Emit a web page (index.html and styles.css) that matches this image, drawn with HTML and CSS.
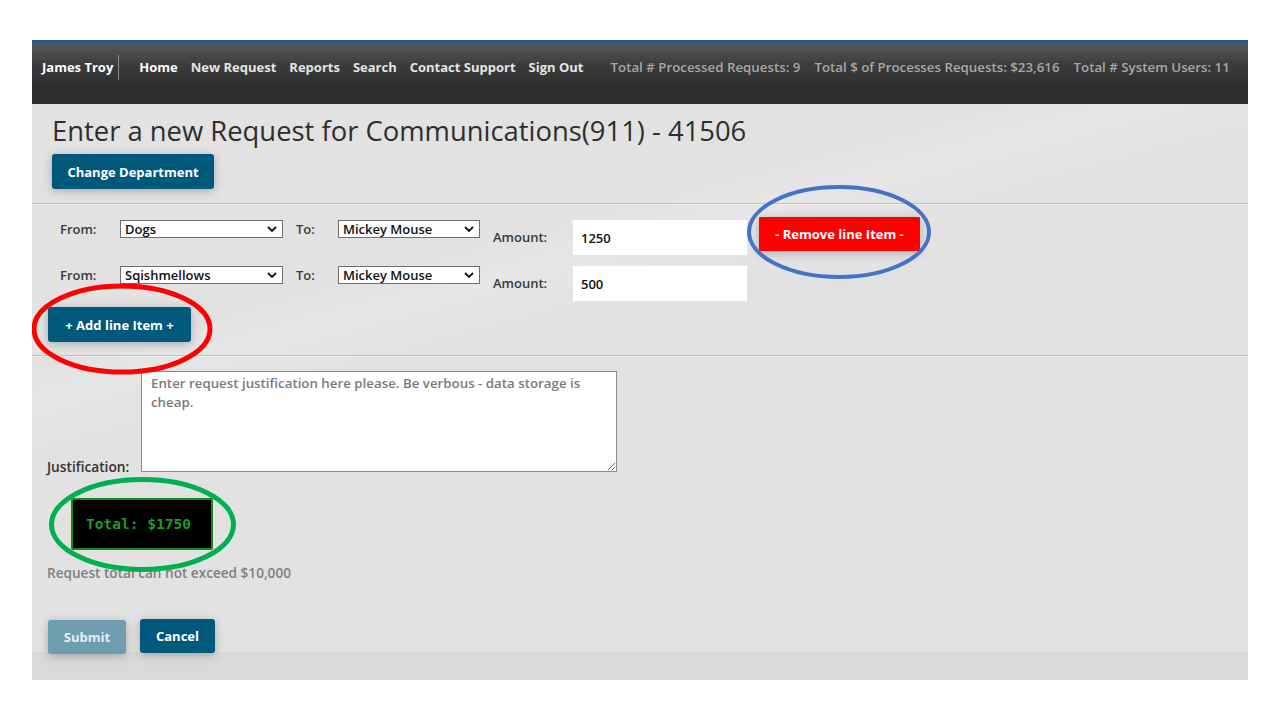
FILE: index.html
```html
<!DOCTYPE html>
<html>
<head>
<meta charset="utf-8">
<title>New Request</title>
<link rel="stylesheet" href="styles.css">
</head>
<body>
<div class="frame">
  <nav class="nav">
    <span class="user">James Troy</span>
    <span class="sep"></span>
    <a class="link home">Home</a>
    <a class="link">New Request</a>
    <a class="link">Reports</a>
    <a class="link">Search</a>
    <a class="link">Contact Support</a>
    <a class="link">Sign Out</a>
    <span class="stat first">Total # Processed Requests: 9</span>
    <span class="stat">Total $ of Processes Requests: $23,616</span>
    <span class="stat">Total # System Users: 11</span>
  </nav>
  <main class="main">
    <h1 class="title">Enter a new Request for Communications(911) - 41506</h1>
    <button class="btn btn-dept">Change Department</button>
    <div class="rule rule-top"></div>
    <div class="row row-1">
      <label class="lbl lbl-from">From:</label>
      <span class="selbox sel-from">
        <select class="sel"><option>Dogs</option></select>
        <svg class="chev" width="10" height="6" viewBox="0 0 10 6"><path d="M1 1 L5 5 L9 1" fill="none" stroke="#111" stroke-width="1.8"/></svg>
      </span>
      <label class="lbl lbl-to">To:</label>
      <span class="selbox sel-to">
        <select class="sel"><option>Mickey Mouse</option></select>
        <svg class="chev" width="10" height="6" viewBox="0 0 10 6"><path d="M1 1 L5 5 L9 1" fill="none" stroke="#111" stroke-width="1.8"/></svg>
      </span>
      <label class="lbl lbl-amt">Amount:</label>
      <input class="amt" type="text" value="1250">
      <button class="btn btn-remove">- Remove line Item -</button>
    </div>
    <div class="row row-2">
      <label class="lbl lbl-from">From:</label>
      <span class="selbox sel-from">
        <select class="sel"><option>Sqishmellows</option></select>
        <svg class="chev" width="10" height="6" viewBox="0 0 10 6"><path d="M1 1 L5 5 L9 1" fill="none" stroke="#111" stroke-width="1.8"/></svg>
      </span>
      <label class="lbl lbl-to">To:</label>
      <span class="selbox sel-to">
        <select class="sel"><option>Mickey Mouse</option></select>
        <svg class="chev" width="10" height="6" viewBox="0 0 10 6"><path d="M1 1 L5 5 L9 1" fill="none" stroke="#111" stroke-width="1.8"/></svg>
      </span>
      <label class="lbl lbl-amt">Amount:</label>
      <input class="amt" type="text" value="500">
    </div>
    <button class="btn btn-add">+ Add line Item +</button>
    <div class="rule rule-mid"></div>
    <div class="just">
      <label class="just-lbl">Justification:</label>
      <textarea class="just-text" placeholder="Enter request justification here please. Be verbous - data storage is cheap."></textarea>
    </div>
    <div class="total">Total: $1750</div>
    <p class="note">Request total can not exceed $10,000</p>
    <div class="actions">
      <button class="btn btn-submit">Submit</button>
      <button class="btn btn-cancel">Cancel</button>
    </div>
  </main>
  <div class="foot"></div>
  <svg class="marks" width="1216" height="640" viewBox="32 40 1216 640">
    <ellipse cx="122" cy="329" rx="88" ry="43" fill="none" stroke="#ff0000" stroke-width="5"/>
    <ellipse cx="839" cy="232" rx="90" ry="45" fill="none" stroke="#4472c4" stroke-width="4"/>
    <ellipse cx="142.5" cy="524.5" rx="91" ry="45" fill="none" stroke="#00b050" stroke-width="5"/>
  </svg>
</div>
</body>
</html>
```
FILE: styles.css
```css
html, body {
  margin: 0;
  padding: 0;
  background: #ffffff;
}
body {
  font-family: "Open Sans", Lato, "Liberation Sans", sans-serif;
}
.frame {
  position: relative;
  width: 1216px;
  height: 640px;
  margin: 40px 0 0 32px;
  overflow: hidden;
}
.nav {
  box-sizing: border-box;
  height: 64px;
  border-top: 3px solid #1d5c8c;
  background: linear-gradient(180deg, #5a5a5a 0%, #3c3c3c 35%, #2f2f2f 70%, #2c2c2c 100%);
  display: flex;
  align-items: flex-start;
  padding: 15px 0 0 10px;
  font-size: 13px;
  line-height: 18px;
  white-space: nowrap;
  overflow: hidden;
}
.nav > * {
  flex-shrink: 0;
}
.user {
  color: #ffffff;
  font-weight: 700;
}
.sep {
  width: 1px;
  height: 25px;
  margin: -3px 20px 0 5px;
  background: #8a8a8a;
}
.link {
  color: #e4e4e4;
  font-weight: 700;
  margin-right: 13px;
}
.link.home {
  color: #ffffff;
}
.stat {
  color: #a8a8a8;
  font-weight: 600;
  font-size: 13.3px;
  margin-right: 14px;
}
.stat.first {
  margin-left: 14px;
}
.main {
  box-sizing: border-box;
  height: 548px;
  background: linear-gradient(165deg, #e2e2e2 0%, #e2e2e2 30%, #e6e6e6 34%, #e2e2e2 40%);
  padding-top: 10px;
}
.title {
  margin: 0 0 0 20px;
  font-size: 27.4px;
  line-height: 34px;
  font-weight: 400;
  color: #2e2e2e;
}
.btn {
  font-family: "Open Sans", Lato, "Liberation Sans", sans-serif;
  font-weight: 700;
  font-size: 13px;
  color: #ffffff;
  border: none;
  border-radius: 3px;
  padding: 0;
  display: block;
  box-shadow: 0 2px 10px rgba(0, 0, 0, 0.25);
}
.btn-dept {
  margin: 6px 0 0 20px;
  width: 162px;
  height: 35px;
  background: #00587a;
}
.rule {
  height: 1px;
  background: #c4c4c4;
  border-bottom: 1px solid #eaeaea;
}
.rule-top {
  margin-top: 14px;
}
.row {
  display: flex;
  align-items: flex-start;
  padding-left: 28px;
}
.row-1 {
  margin-top: 12px;
}
.row-2 {
  margin-top: 7px;
}
.lbl {
  font-size: 13px;
  font-weight: 600;
  color: #3a3a3a;
  line-height: 18px;
  margin-top: 3px;
}
.lbl-from {
  width: 60px;
}
.lbl-to {
  width: 42px;
  margin-left: 13px;
}
.lbl-amt {
  width: 79px;
  margin-left: 13px;
  margin-top: 11px;
}
.selbox {
  position: relative;
  box-sizing: border-box;
  display: block;
  height: 18px;
  margin-top: 3px;
  background: #ffffff;
  border: 1px solid #6f6f6f;
}
.sel {
  -webkit-appearance: none;
  appearance: none;
  display: block;
  box-sizing: border-box;
  width: 100%;
  height: 16px;
  margin: 0;
  padding: 0 16px 0 4px;
  border: none;
  border-radius: 0;
  background: transparent;
  font-family: "Open Sans", Lato, "Liberation Sans", sans-serif;
  font-size: 13px;
  font-weight: 600;
  line-height: 16px;
  color: #111111;
  outline: none;
}
.chev {
  position: absolute;
  right: 5px;
  top: 5px;
  pointer-events: none;
}
.sel-from {
  width: 163px;
}
.sel-to {
  width: 142px;
}
.amt {
  box-sizing: border-box;
  width: 176px;
  height: 37px;
  margin-top: 2px;
  border: 1px solid #e6e6e6;
  background: #ffffff;
  padding: 0 8px;
  font-family: "Open Sans", Lato, "Liberation Sans", sans-serif;
  font-size: 13px;
  font-weight: 600;
  color: #111111;
  outline: none;
}
.btn-remove {
  margin-left: 11px;
  width: 161px;
  height: 34px;
  background: #ff0000;
  border-radius: 1px;
}
.btn-add {
  margin: 5px 0 0 16px;
  width: 143px;
  height: 35px;
  background: #00587a;
}
.rule-mid {
  margin-top: 13px;
}
.just {
  display: flex;
  align-items: flex-end;
  padding-left: 15px;
  margin-top: 14px;
}
.just-lbl {
  font-size: 13.7px;
  font-weight: 600;
  color: #333333;
  line-height: 18px;
  width: 94px;
  margin-bottom: -4px;
}
.just-text {
  box-sizing: border-box;
  width: 476px;
  height: 101px;
  margin: 0;
  border: 1px solid #8a8a8a;
  background: #ffffff;
  padding: 2px 9px;
  font-family: "Open Sans", Lato, "Liberation Sans", sans-serif;
  font-size: 13.3px;
  font-weight: 600;
  line-height: 19px;
  color: #333333;
}
.just-text::placeholder {
  color: #7a7a7a;
}
.total {
  box-sizing: border-box;
  width: 142px;
  height: 52px;
  margin: 26px 0 0 39px;
  padding-right: 7px;
  background: #000000;
  border: 2px solid #17891a;
  border-radius: 2px;
  color: #1f9c22;
  font-family: "DejaVu Sans Mono", "Liberation Mono", monospace;
  font-weight: 700;
  font-size: 14.5px;
  line-height: 48px;
  text-align: center;
}
.note {
  margin: 14px 0 0 15px;
  font-size: 13.6px;
  line-height: 18px;
  color: #7f7f7f;
  font-weight: 600;
}
.actions {
  display: flex;
  align-items: flex-start;
  margin: 37px 0 0 16px;
}
.btn-submit {
  width: 78px;
  height: 34px;
  margin-top: 1px;
  background: #6e9db0;
  color: #e8eef1;
}
.btn-cancel {
  width: 75px;
  height: 34px;
  margin-left: 14px;
  background: #00587a;
}
.foot {
  height: 28px;
  background: #d9d9d9;
}
.marks {
  position: absolute;
  left: 0;
  top: 0;
  pointer-events: none;
}
```
